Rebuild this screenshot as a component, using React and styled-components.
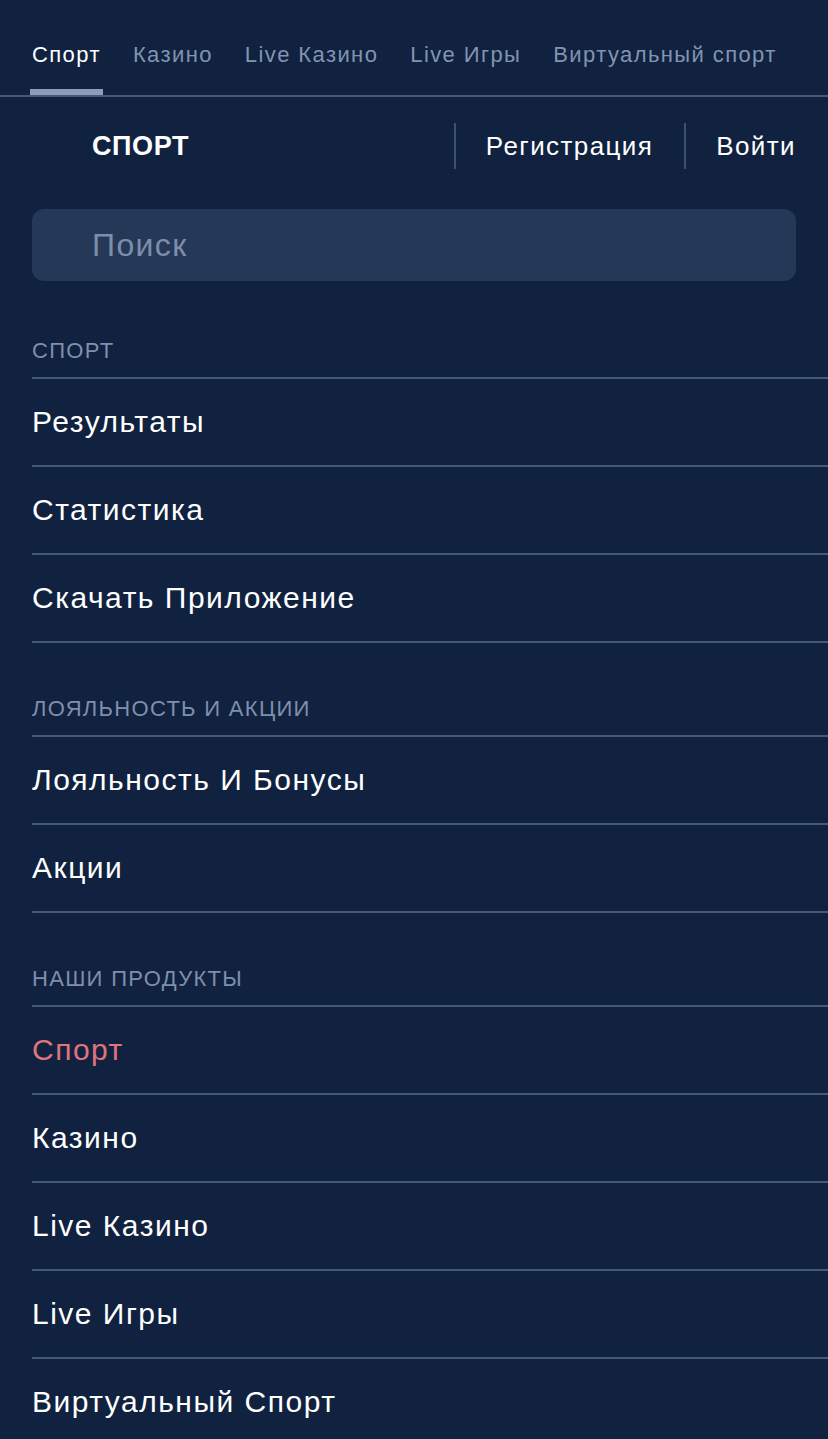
import styled, { createGlobalStyle } from "styled-components";

const GlobalStyle = createGlobalStyle`
  html, body {
    margin: 0;
    padding: 0;
    background: #10223f;
  }
  * {
    box-sizing: border-box;
  }
`;

const Page = styled.div`
  min-height: 100vh;
  background: #10223f;
  font-family: "Liberation Sans", Arial, sans-serif;
  color: #ffffff;
  overflow: hidden;
`;

const TabBar = styled.nav`
  display: flex;
  gap: 32px;
  height: 97px;
  padding-left: 32px;
  border-bottom: 2px solid #44597d;
  white-space: nowrap;
`;

const Tab = styled.span`
  position: relative;
  display: flex;
  align-items: center;
  padding-top: 14px;
  font-size: 22px;
  letter-spacing: 1.4px;
  color: ${(p) => (p.$active ? "#ffffff" : "#8294b2")};

  &::after {
    content: "";
    display: ${(p) => (p.$active ? "block" : "none")};
    position: absolute;
    left: -2px;
    right: -2px;
    bottom: 0;
    height: 6px;
    background: #8d9cb9;
  }
`;

const Header = styled.header`
  display: flex;
  align-items: center;
  height: 98px;
  padding: 0 32px 0 92px;
`;

const Title = styled.h1`
  flex: 1;
  margin: 0;
  font-size: 27px;
  font-weight: bold;
  letter-spacing: 0.6px;
`;

const Divider = styled.span`
  width: 2px;
  height: 46px;
  background: #3b5075;
`;

const HeaderLink = styled.a`
  padding: 0 ${(p) => (p.$last ? "0" : "31px")} 0 30px;
  font-size: 26px;
  letter-spacing: 1.4px;
  color: #ffffff;
  text-decoration: none;
`;

const Search = styled.input`
  display: block;
  width: calc(100% - 64px);
  height: 72px;
  margin: 14px 32px 0;
  padding: 0 0 0 60px;
  border: none;
  border-radius: 12px;
  background: #263857;
  font-family: inherit;
  font-size: 32px;
  letter-spacing: 1.4px;
  color: #ffffff;
  outline: none;

  &::placeholder {
    color: #7c8eac;
  }
`;

const Section = styled.section`
  margin-left: 32px;
  padding-top: ${(p) => (p.$first ? "58px" : "54px")};
`;

const SectionLabel = styled.div`
  padding-bottom: 14px;
  font-size: 22px;
  line-height: 24px;
  letter-spacing: 1.3px;
  color: #7f8fac;
  border-bottom: 2px solid #44597d;
`;

const Item = styled.a`
  display: flex;
  align-items: center;
  height: 88px;
  font-size: 30px;
  letter-spacing: 1.5px;
  color: ${(p) => (p.$active ? "#e0737c" : "#ffffff")};
  text-decoration: none;
  border-bottom: 2px solid #44597d;
`;

const tabs = ["Спорт", "Казино", "Live Казино", "Live Игры", "Виртуальный спорт"];

const sections = [
  {
    title: "СПОРТ",
    items: ["Результаты", "Статистика", "Скачать Приложение"],
  },
  {
    title: "ЛОЯЛЬНОСТЬ И АКЦИИ",
    items: ["Лояльность И Бонусы", "Акции"],
  },
  {
    title: "НАШИ ПРОДУКТЫ",
    items: ["Спорт", "Казино", "Live Казино", "Live Игры", "Виртуальный Спорт"],
    active: "Спорт",
  },
];

export default function App() {
  return (
    <Page>
      <GlobalStyle />
      <TabBar>
        {tabs.map((t, i) => (
          <Tab key={t} $active={i === 0}>
            {t}
          </Tab>
        ))}
      </TabBar>

      <Header>
        <Title>СПОРТ</Title>
        <Divider />
        <HeaderLink href="#">Регистрация</HeaderLink>
        <Divider />
        <HeaderLink href="#" $last>
          Войти
        </HeaderLink>
      </Header>

      <Search type="text" placeholder="Поиск" />

      {sections.map((s, i) => (
        <Section key={s.title} $first={i === 0}>
          <SectionLabel>{s.title}</SectionLabel>
          {s.items.map((item) => (
            <Item key={item} href="#" $active={item === s.active}>
              {item}
            </Item>
          ))}
        </Section>
      ))}
    </Page>
  );
}
